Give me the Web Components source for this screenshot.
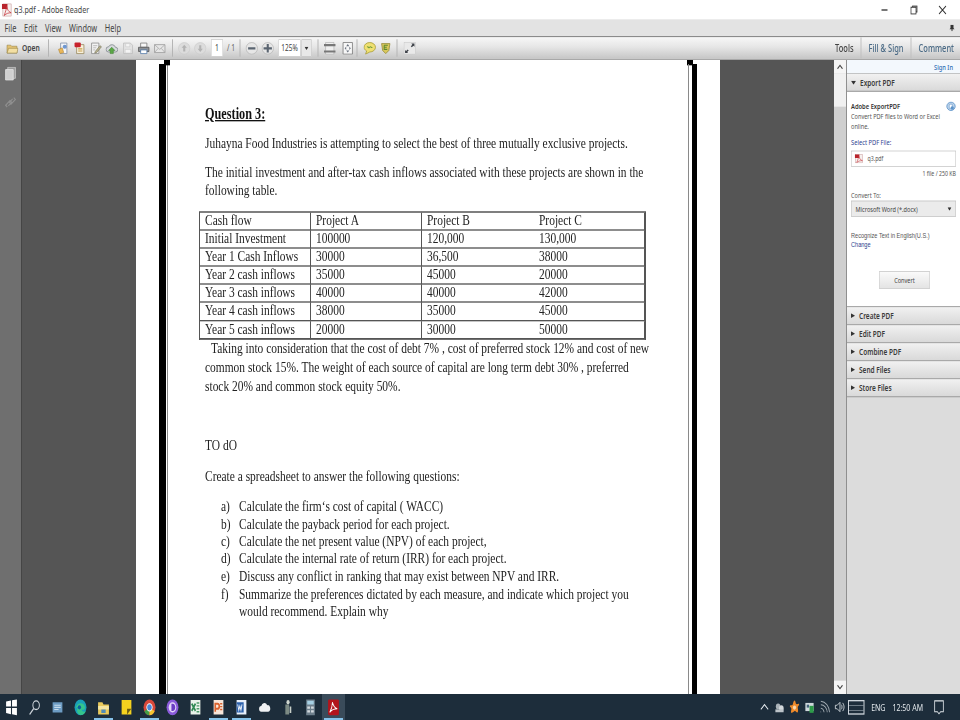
<!DOCTYPE html>
<html lang="en">
<head>
<meta charset="UTF-8">
<title>q3.pdf - Adobe Reader</title>
<style>
  html,body{margin:0;padding:0;overflow:hidden;background:#fff;width:960px;height:720px}
</style>
</head>
<body>
<!-- the capture is a 1920x1080 desktop squeezed to 960x720, so lay out at full size and scale the app -->
<reader-app>
  <title-bar slot="top" name="q3.pdf - Adobe Reader"></title-bar>
  <menu-bar slot="top"></menu-bar>
  <tool-bar slot="top"></tool-bar>
  <nav-rail slot="main"></nav-rail>
  <pdf-view slot="main">
    <pdf-page>
      <h3>Question 3:</h3>
      <p style="margin-top:16.500px">Juhayna Food Industries is attempting to select the best of three mutually exclusive projects.</p>
      <p style="margin-top:17px">The initial investment and after-tax cash inflows associated with these projects are shown in the following table.</p>
      <cash-table></cash-table>
      <p style="text-indent:12px;line-height:28.500px">Taking into consideration that the cost of debt 7% , cost of preferred stock 12% and cost of new common stock 15%. The weight of each source of capital are long term debt 30% , preferred stock 20% and common stock equity 50%.</p>
      <p style="margin-top:60px">TO dO</p>
      <p style="margin-top:19.500px">Create a spreadsheet to answer the following questions:</p>
      <div style="margin-top:19.500px">
        <q-item mark="a)">Calculate the firm‘s cost of capital ( WACC)</q-item>
        <q-item mark="b)">Calculate the payback period for each project.</q-item>
        <q-item mark="c)">Calculate the net present value (NPV) of each project,</q-item>
        <q-item mark="d)">Calculate the internal rate of return (IRR) for each project.</q-item>
        <q-item mark="e)">Discuss any conflict in ranking that may exist between NPV and IRR.</q-item>
        <q-item mark="f)">Summarize the preferences dictated by each measure, and indicate which project you would recommend. Explain why</q-item>
      </div>
    </pdf-page>
  </pdf-view>
  <v-scroll slot="main"></v-scroll>
  <side-panel slot="main"></side-panel>
  <task-bar slot="bottom"></task-bar>
</reader-app>

<script>
  // icons are drawn on a 24x24 grid, the non uniform scale of the app is undone by the svg size
  const ICONS = {
    folder:'<path d="M2 6h7l2 2h10v13H2z" fill="#e3c272" stroke="#8f7a3c"/><path d="M2 21l3-9h18l-2 9z" fill="#f3dfa3" stroke="#8f7a3c"/>',
    create:'<path d="M6 2h12v20H6z" fill="#f4f6fa" stroke="#7d8ca5" stroke-width="1.500"/><path d="M2 14l7-3 3 9-7 2z" fill="#e9b75a" stroke="#a87b2a"/><circle cx="14" cy="9" r="4" fill="#6f97cf"/>',
    pdf:'<path d="M6 5h14v17H6z" fill="#f8f1dc" stroke="#97865a" stroke-width="1.500"/><rect x="2" y="1" width="12" height="9" rx="2" fill="#c8232c"/><path d="M9 13h8M9 17h8" stroke="#c8a04c" stroke-width="2"/>',
    edit:'<path d="M4 2h14v20H4z" fill="#f3f3f3" stroke="#8a8a8a" stroke-width="1.500"/><path d="M7 7h8M7 11h6M7 15h4" stroke="#aaa" stroke-width="1.500"/><path d="M11 18l9-11 3 2-9 11-4 1z" fill="#b5b08c" stroke="#6d6a50"/>',
    cloud:'<path d="M6 19a5 5 0 0 1 0-10 7 7 0 0 1 13 1 4.500 4.500 0 0 1 0 9z" fill="#d6d9dc" stroke="#80868c" stroke-width="1.500"/><path d="M12 10l6 6h-3v6H9v-6H6z" fill="#5aa845" stroke="#3c7d2c"/>',
    save:'<path d="M4 2h13l4 4v16H4z" fill="#e4e4e4" stroke="#bdbdbd" stroke-width="1.500"/><path d="M8 3h8v6H8zM7 14h11v7H7z" fill="#f4f4f4" stroke="#c5c5c5"/>',
    print:'<path d="M6 2h12v8H6z" fill="#f7f7f7" stroke="#777" stroke-width="1.500"/><path d="M2 10h20v8H2z" fill="#8d9196" stroke="#555" stroke-width="1.500"/><path d="M6 15h12v7H6z" fill="#fff" stroke="#4e77a8" stroke-width="1.500"/>',
    mail:'<path d="M2 5h20v15H2z" fill="#e6e6e6" stroke="#9a9a9a" stroke-width="1.500"/><path d="M2 5l10 9 10-9M2 20l7-8M22 20l-7-8" fill="none" stroke="#a8a8a8" stroke-width="1.500"/>',
    up:'<circle cx="12" cy="12" r="11" fill="#dcdcdc" stroke="#c8c8c8"/><path d="M12 5l5 6h-3v7h-4v-7H7z" fill="#b3b3b3"/>',
    down:'<circle cx="12" cy="12" r="11" fill="#dcdcdc" stroke="#c8c8c8"/><path d="M12 19l5-6h-3V6h-4v7H7z" fill="#b3b3b3"/>',
    minus:'<circle cx="12" cy="12" r="11" fill="#e6e6e6" stroke="#a5a5a5"/><path d="M5 10h14v4H5z" fill="#5a6470"/>',
    plus:'<circle cx="12" cy="12" r="11" fill="#e6e6e6" stroke="#a5a5a5"/><path d="M10 4h4v6h6v4h-6v6h-4v-6H4v-4h6z" fill="#5a6470"/>',
    fitw:'<path d="M4 1h16v22H4z" fill="#efefef" stroke="#a0a0a0"/><path d="M1 4h22v4H1zM1 16h22v4H1z" fill="#777"/>',
    fitp:'<path d="M3 1h18v22H3z" fill="#f7f7f7" stroke="#777" stroke-width="1.500"/><path d="M12 4l3 4H9zM12 20l3-4H9zM6 12l3-3v6zM18 12l-3-3v6z" fill="#6c7480"/>',
    note:'<path d="M12 1c6 0 11 4 11 9s-5 9-11 9l-8 4 2-6c-3-2-5-4-5-7 0-5 5-9 11-9z" fill="#efe071" stroke="#a69a3c" stroke-width="1.500"/><path d="M7 10c2-3 3 3 5 0s3 2 5 0" fill="none" stroke="#6f9a3b" stroke-width="2"/>',
    stamp:'<path d="M4 3h16l-2 13-6 6-6-6z" fill="#d9c85c" stroke="#958a38" stroke-width="1.500"/><path d="M9 6h7M9 6v8h6M9 10h5" fill="none" stroke="#5f8a2e" stroke-width="2"/>',
    expand:'<rect x="1" y="1" width="22" height="22" fill="#e9e9e9" stroke="#c5c5c5"/><path d="M15 3h6v6l-2-2-3 3-2-2 3-3zM9 21H3v-6l2 2 3-3 2 2-3 3z" fill="#3d4148"/>',
    pages:'<path d="M7 1h14v19H7z" fill="#9a9a9a" stroke="#c9c9c9" stroke-width="1.500"/><path d="M3 5h14v18H3z" fill="#cfcfcf" stroke="#e2e2e2" stroke-width="1.500"/>',
    clip:'<path d="M6 20l-3-3 8-8 3 3-6 6M18 4l3 3-8 8-3-3 6-6" fill="none" stroke="#8f8f8f" stroke-width="2"/>',
    acro:'<rect x="3" y="1" width="18" height="22" fill="#f6f0ee" stroke="#b98080"/><path d="M1 1h12v9H1z" fill="#b8242c"/><path d="M6 22c3-8 5-12 5-16 2 6 5 9 10 11-6 0-10 1-15 5z" fill="none" stroke="#c8343c" stroke-width="1.500"/>',
    exportp:'<circle cx="12" cy="12" r="10" fill="#bcd4ec" stroke="#5d93c9" stroke-width="2"/><path d="M8 7h7v10H8z" fill="#fff" stroke="#3d7ab8"/><circle cx="15" cy="16" r="4" fill="#5d93c9"/>',
    win:'<path d="M2 4l9-1.500V11H2zM13 2.200L22 1v10h-9zM2 13h9v8.500L2 20zM13 13h9v10l-9-1.300z" fill="#fff"/>',
    search:'<circle cx="15" cy="9" r="6" fill="none" stroke="#cfd6dc" stroke-width="1.800"/><path d="M10.500 13.500L3 22" stroke="#cfd6dc" stroke-width="2"/>',
    tv:'<path d="M3 5h18v14H3z" fill="#6d9cc4"/><path d="M6 9h12M6 12h12M6 15h8" stroke="#c6dcec" stroke-width="1.500"/>',
    edge:'<circle cx="12" cy="12" r="11" fill="#1aa0b8"/><path d="M3 14c2-9 14-10 17-3 1 3-1 5-6 4 1 3 5 4 8 2-3 6-10 7-14 4-3-2-3-7 0-9-3 0-4 1-5 2z" fill="#34c48c"/><circle cx="10" cy="12" r="3" fill="#0d5f9c"/>',
    files:'<path d="M2 5h8l2 3h10v14H2z" fill="#e8c95c"/><path d="M2 10h20v5H2z" fill="#f5e6a2"/><path d="M8 15h8v5H8z" fill="#4f8bb8"/>',
    sticky:'<path d="M3 2h18v20H3z" fill="#f4d21f"/><path d="M13 22l8-8h-8z" fill="#6d5f12"/>',
    chrome:'<circle cx="12" cy="12" r="11" fill="#d8483a"/><path d="M12 12L2.500 17.500A11 11 0 0 0 12 23z" fill="#43a047"/><path d="M12 12l9.500 5.500A11 11 0 0 1 12 23z" fill="#f4c430"/><circle cx="12" cy="12" r="5" fill="#4a88d8" stroke="#fff" stroke-width="1.500"/>',
    disc:'<circle cx="12" cy="12" r="11" fill="#8b5bdc"/><circle cx="12" cy="12" r="7" fill="#e3d8f8"/><path d="M10 7h2a5 5 0 0 1 0 10h-2z" fill="#6a3cc4"/>',
    excel:'<path d="M3 2h18v20H3z" fill="#e9f2ea"/><path d="M14 6h5M14 10h5M14 14h5M14 18h5" stroke="#4e9a6a" stroke-width="2"/><path d="M5 7l7 10M12 7L5 17" stroke="#2f8a53" stroke-width="3"/>',
    ppt:'<path d="M3 2h18v20H3z" fill="#f8e6da"/><path d="M15 7h4M15 11h4M15 15h4" stroke="#d9622f" stroke-width="2"/><path d="M6 18V7h4a3 3 0 0 1 0 7H6" fill="none" stroke="#d9622f" stroke-width="3"/>',
    word:'<path d="M3 2h18v20H3z" fill="#e9f0fa"/><path d="M3 5h13v14H3z" fill="#2d62ad"/><path d="M5 8l2 8 2-6 2 6 2-8" fill="none" stroke="#fff" stroke-width="1.500"/>',
    onedrive:'<path d="M6 18a4 4 0 0 1 0-8 6 6 0 0 1 11-1 4.500 4.500 0 0 1 2 9z" fill="#f0f2f4"/>',
    tools:'<path d="M8 8h7v14H8z" fill="#7c8a84"/><circle cx="13" cy="5" r="3" fill="#cfd6cf"/><path d="M16 11h3v9h-3z" fill="#c8cfc8"/>',
    calc:'<path d="M4 1h16v22H4z" fill="#6e7f8c"/><path d="M6 3h12v5H6z" fill="#a6d0e4"/><path d="M6 11h5v3H6zM13 11h5v3h-5zM6 16h5v3H6zM13 16h5v3h-5z" fill="#d3dade"/>',
    acrobat:'<rect x="2" y="1" width="20" height="22" rx="2" fill="#b3141c"/><path d="M5 19c4-5 5-10 5-14 2 6 4 8 9 9-6 0-10 1-14 5z" fill="none" stroke="#fff" stroke-width="1.500"/>',
    caret:'<path d="M4 16l8-8 8 8" fill="none" stroke="#e7edf2" stroke-width="2"/>',
    people:'<circle cx="9" cy="11" r="5" fill="#aab2b8"/><circle cx="16" cy="14" r="5" fill="#d3d8dc"/><path d="M3 21h18v-5H3z" fill="#bcc3c8"/>',
    avast:'<path d="M13 1c2 3 1 5 3 6s5-2 6 0-3 4-3 6 2 6 0 8-4-2-6-2-6 4-8 3 1-6 0-8-4-2-3-4 5 0 6-2 2-8 5-7z" fill="#ee8a2a"/><circle cx="12" cy="13" r="3.500" fill="#f7d9b0"/>',
    store:'<path d="M3 5h18v14H3z" fill="#cfd8dc"/><path d="M12 10h9v12h-9z" fill="#2e9c4a"/><path d="M6 8h5v5H6z" fill="#43627a"/>',
    wifi:'<path d="M4 21a3 3 0 0 1 0-1M4 14a8 8 0 0 1 7 7M4 8a14 14 0 0 1 14 13M4 2a20 20 0 0 1 19 19" fill="none" stroke="#a4adb4" stroke-width="1.800"/>',
    speaker:'<path d="M3 9h4l6-5v16l-6-5H3z" fill="none" stroke="#e2e7eb" stroke-width="1.500"/><path d="M16 8c2 2 2 6 0 8M19 5c4 4 4 10 0 14" fill="none" stroke="#e2e7eb" stroke-width="1.500"/>',
    notify:'<path d="M4 3h16v15h-5l-3 3-3-3H4z" fill="none" stroke="#e2e7eb" stroke-width="1.500"/>'
  };
  const svg = (name, w = 24, h = 18) =>
    `<svg width="${w}" height="${h}" viewBox="0 0 24 24" preserveAspectRatio="none" style="display:block;flex:none">${ICONS[name]}</svg>`;

  // small helper, every element gets its own open shadow root
  function define(tag, html, render){
    customElements.define(tag, class extends HTMLElement{
      connectedCallback(){
        if(this.shadowRoot) return;
        this.attachShadow({mode:'open'}).innerHTML = render ? html + render(this) : html;
      }
    });
  }

  const UI = `font-family:"Noto Sans","Liberation Sans",sans-serif;`;

  define('reader-app', `
    <style>
      :host{display:block;width:960px;height:720px;overflow:hidden;background:#fff;${UI}}
      .stage{display:flex;flex-direction:column;width:1920px;height:1080px;transform:scale(.5,.66667);transform-origin:0 0;filter:blur(.5px);overflow:hidden}
      .main{display:flex;height:951px;overflow:hidden;flex:none}
    </style>
    <div class="stage">
      <div><slot name="top"></slot></div>
      <div class="main"><slot name="main"></slot></div>
      <slot name="bottom"></slot>
    </div>`);

  define('title-bar', `
    <style>
      :host{display:flex;align-items:center;height:29px;background:#fff;color:#444;font-size:14.300px}
      .ic{margin:0 3px 0 3px}
      .sp{flex:1}
      .b{width:58px;display:flex;justify-content:center}
    </style>`, el => `
    <span class="ic">${svg('acro',22,20)}</span><span>${el.getAttribute('name')}</span><span class="sp"></span>
    <span class="b"><svg width="18" height="12" viewBox="0 0 18 12"><path d="M3 6h12" stroke="#333" stroke-width="2"/></svg></span>
    <span class="b"><svg width="18" height="14" viewBox="0 0 18 14"><path d="M4 3h10v10H4zM7 3V1h9v9h-2" fill="none" stroke="#333" stroke-width="1.500"/></svg></span>
    <span class="b" style="margin-right:6px"><svg width="18" height="14" viewBox="0 0 18 14"><path d="M2 1l14 12M16 1L2 13" stroke="#333" stroke-width="1.500"/></svg></span>`);

  define('menu-bar', `
    <style>
      :host{display:flex;align-items:center;height:27px;background:#e3e3e3;color:#444;font-size:14.800px;border-bottom:2px solid #8b8b8b;box-sizing:border-box;padding-left:9px;gap:15.500px}
      .sp{flex:1}
      svg{margin-right:10px}
    </style>
    <span>File</span><span>Edit</span><span>View</span><span>Window</span><span>Help</span><span class="sp"></span>
    <svg width="12" height="10" viewBox="0 0 12 10"><path d="M3 0h6v5l2 2H1l2-2zM5 7h2v3H5z" fill="#333"/></svg>`);

  define('tool-btn', `
    <style>:host{display:flex;width:32px;height:32px;align-items:center;justify-content:center;flex:none}</style>`,
    el => svg(el.getAttribute('i'), 25, 19));

  define('tool-bar', `
    <style>
      :host{display:flex;align-items:center;height:34px;background:linear-gradient(#f7f7f7,#e6e6e6 45%,#c6c6c6);color:#444;font-size:13.500px;border-bottom:2px solid #a8a8a8;box-sizing:border-box;padding-left:8px;padding-right:12px}
      .open{margin:0 18px 0 4px;font-weight:600;width:34px;white-space:nowrap}
      .sep{width:2px;height:26px;background:#b5b5b5;flex:none}
      .inp{background:#fff;border:1px solid #c2c2c2;box-sizing:border-box;height:26px;display:flex;align-items:center;justify-content:center;flex:none}
      .dd{width:20px;height:26px;margin-left:2px;background:#e8e8e8;border:1px solid #c2c2c2;box-sizing:border-box;display:flex;align-items:center;justify-content:center}
      .sp{flex:1}
      .tab{color:#4a6a85;font-weight:500;font-size:15px;display:flex;height:100%;align-items:center;padding:0 14px;border-left:2px solid #c0c0c0}
      .tab.first{border-left:0;color:#444}
      .tab:last-child{padding-right:0}
    </style>
    <tool-btn i="folder"></tool-btn><span class="open">Open</span><span class="sep" style="margin-right:13px"></span>
    <tool-btn i="create"></tool-btn><tool-btn i="pdf"></tool-btn><tool-btn i="edit"></tool-btn><tool-btn i="cloud"></tool-btn><tool-btn i="save"></tool-btn><tool-btn i="print"></tool-btn><tool-btn i="mail"></tool-btn>
    <span class="sep" style="margin:0 6px 0 9px"></span>
    <tool-btn i="up"></tool-btn><tool-btn i="down"></tool-btn>
    <span class="inp" style="width:24px;margin-left:6px">1</span><span style="margin:0 9px 0 8px;color:#666;white-space:nowrap">/ 1</span><span class="sep" style="margin-right:6px"></span>
    <tool-btn i="minus"></tool-btn><tool-btn i="plus"></tool-btn>
    <span class="inp" style="width:44px;margin-left:6px;font-size:13px">125%</span><span class="dd"><svg width="8" height="5" viewBox="0 0 8 5"><path d="M0 0h8L4 5z" fill="#333"/></svg></span>
    <span class="sep" style="margin:0 6px 0 12px"></span>
    <tool-btn i="fitw"></tool-btn><tool-btn i="fitp" style="margin-left:4px"></tool-btn><span class="sep" style="margin:0 8px 0 2px"></span>
    <tool-btn i="note"></tool-btn><tool-btn i="stamp"></tool-btn><span class="sep" style="margin:0 8px 0 6px"></span>
    <tool-btn i="expand"></tool-btn>
    <span class="sp"></span>
    <span class="tab first">Tools</span><span class="tab">Fill &amp; Sign</span><span class="tab">Comment</span>`);

  define('nav-rail', `
    <style>
      :host{display:flex;flex-direction:column;align-items:center;width:44px;flex:none;background:#6f6f6f;border-right:2px solid #454545;box-sizing:border-box;padding-top:10px;gap:22px}
    </style>` + svg('pages',26,21) + svg('clip',26,21));

  define('pdf-view', `
    <style>
      :host{display:flex;flex:none;width:1624px;background:#555;padding:0 0 0 228px;box-sizing:border-box}
    </style><slot></slot>`);

  define('pdf-page', `
    <style>
      :host{display:block;width:1168px;height:951px;background:#fff;box-sizing:border-box;padding:6px 46px 0 46px;flex:none}
      .frame{height:100%;box-sizing:border-box;position:relative;border-left:14px solid #000;border-right:10px solid #000;padding:60px 0 0 78px}
      .frame::before,.frame::after{content:"";position:absolute;top:0;bottom:0;width:2px;background:#8a8a8a}
      .frame::before{left:2px}
      .frame::after{right:6px}
      .ledge{position:absolute;top:-6px;width:12px;height:8px;background:#000}
      .body{width:894px;font:22.900px/27px "Liberation Serif",serif;color:#222}
      ::slotted(h3){margin:0;font:bold 24.500px/28px "Liberation Serif",serif;text-decoration:underline;color:#111}
      ::slotted(p){margin:0}
    </style>
    <div class="frame">
      <span class="ledge" style="left:-4px"></span><span class="ledge" style="right:-2px"></span>
      <div class="body"><slot></slot></div>
    </div>`);

  define('q-item', `
    <style>
      :host{display:grid;grid-template-columns:36px 1fr;padding-left:32px;line-height:26.200px}
    </style>`, el => `<span>${el.getAttribute('mark')}</span><span><slot></slot></span>`);

  const ROWS = [
    ['Cash flow','Project A','Project B','Project C'],
    ['Initial Investment','100000','120,000','130,000'],
    ['Year 1 Cash Inflows','30000','36,500','38000'],
    ['Year 2 cash inflows','35000','45000','20000'],
    ['Year 3 cash inflows','40000','40000','42000'],
    ['Year 4 cash inflows','38000','35000','45000'],
    ['Year 5 cash inflows','20000','30000','50000']
  ];
  define('cash-table', `
    <style>
      :host{display:grid;grid-template-columns:222px 222px 224px 222px;grid-auto-rows:27.200px;margin:18px 0 -1.500px -12px;width:894px;border:2px solid #555;box-sizing:border-box;border-width:2px 2px 1px 2px;background:#fff;color:#222}
      div{padding-left:10px;border-right:2px solid #555;border-bottom:2px solid #555;box-sizing:border-box;line-height:23.500px;white-space:nowrap;overflow:hidden}
      div:nth-child(4n){border-right:0}
    </style>`, () => ROWS.flat().map(c => `<div>${c}</div>`).join(''));

  define('v-scroll', `
    <style>
      :host{display:flex;flex-direction:column;width:24px;flex:none;background:#cfcfcf}
      .a{height:20px;background:#f5f5f5;display:flex;align-items:center;justify-content:center}
      .t{height:50px;background:#f0f0f0}
      .m{flex:1}
    </style>
    <div class="a"><svg width="14" height="8" viewBox="0 0 14 8"><path d="M2 7l5-5 5 5" fill="none" stroke="#444" stroke-width="2"/></svg></div>
    <div class="t"></div><div class="m"></div>
    <div class="a"><svg width="14" height="8" viewBox="0 0 14 8"><path d="M2 1l5 5 5-5" fill="none" stroke="#444" stroke-width="2"/></svg></div>`);

  define('panel-head', `
    <style>
      :host{display:flex;align-items:center;height:27px;background:linear-gradient(#f1f1f1,#d9d9d9);border-bottom:2px solid #a9a9a9;box-sizing:border-box;font-size:13px;font-weight:600;color:#3b3b3b;padding-left:8px;gap:8px}
      svg{flex:none}
    </style>`, el => (el.hasAttribute('open')
      ? '<svg width="10" height="6" viewBox="0 0 10 6"><path d="M0 0h10L5 6z" fill="#333"/></svg>'
      : '<svg width="8" height="7" viewBox="0 0 8 7"><path d="M0 0l8 3.500L0 7z" fill="#333"/></svg>') + `<span>${el.getAttribute('t')}</span>`);

  define('side-panel', `
    <style>
      :host{display:flex;flex-direction:column;width:228px;flex:none;background:#dcdcdc;border-left:2px solid #8f8f8f;box-sizing:border-box;font-size:11.200px;color:#555}
      .sign{height:21px;background:#f3f8fd;color:#2f6fb5;font-size:11.500px;font-weight:500;text-align:right;padding:0 14px;line-height:21px;border-bottom:1px solid #aaa;box-sizing:border-box}
      .body{background:#fff;height:323px;box-sizing:border-box;padding:3px 8px 0 8px;border-bottom:2px solid #a9a9a9;flex:none}
      .row{display:flex;justify-content:space-between;align-items:center;padding:10px 0 0;height:27px;box-sizing:border-box}
      .h{font-size:11.600px;font-weight:600;color:#333}
      .d{line-height:14px;margin-top:0}
      .lbl{color:#2e3f8f;margin-top:10px;font-size:11.500px;line-height:16px}
      .field{border:1px solid #bdbdbd;height:24px;display:flex;align-items:center;gap:8px;padding:0 6px;margin:4px 0 0 0;box-sizing:border-box;font-size:10.500px}
      .lim{text-align:right;margin:2px 0 0 0;line-height:16px;font-size:10.500px}
      .sel{background:#ebebeb;border:1px solid #bdbdbd;height:24px;display:flex;align-items:center;justify-content:space-between;padding:0 8px;margin:0;box-sizing:border-box;color:#444}
      .btn{width:102px;height:26px;margin:34px auto 0;border:1px solid #bcbcbc;background:linear-gradient(#fafafa,#e4e4e4);display:flex;align-items:center;justify-content:center;box-sizing:border-box;color:#444;transform:translateX(2px)}
      .lib{font:11.200px/13px "Liberation Sans",sans-serif}
    </style>
    <div class="sign">Sign In</div>
    <panel-head t="Export PDF" open></panel-head>
    <div class="body">
      <div class="row"><span class="h">Adobe ExportPDF</span>${svg('exportp',20,15)}</div>
      <div class="d">Convert PDF files to Word or Excel online.</div>
      <div class="lbl">Select PDF File:</div>
      <div class="field">${svg('acro',18,14)}<span>q3.pdf</span></div>
      <div class="lim">1 file / 250 KB</div>
      <div style="margin-top:17px;line-height:16px">Convert To:</div>
      <div class="sel"><span>Microsoft Word (*.docx)</span><svg width="8" height="5" viewBox="0 0 8 5"><path d="M0 0h8L4 5z" fill="#333"/></svg></div>
      <div class="lib" style="margin-top:22px">Recognize Text in English(U.S.)</div>
      <div class="lib" style="color:#2e3f8f">Change</div>
      <div class="btn">Convert</div>
    </div>
    <panel-head t="Create PDF"></panel-head>
    <panel-head t="Edit PDF"></panel-head>
    <panel-head t="Combine PDF"></panel-head>
    <panel-head t="Send Files"></panel-head>
    <panel-head t="Store Files"></panel-head>`);

  const APPS = [['win'],['search'],['tv'],['edge'],['files',1],['sticky'],['chrome',1],['disc'],['excel'],['ppt',1],['word',1],['onedrive'],['tools'],['calc'],['acrobat',2]];
  const TRAY = ['caret','people','avast','store','wifi','speaker'];
  define('task-bar', `
    <style>
      :host{display:flex;align-items:center;height:39px;background:#1d2d3b;color:#e3e8ec;font-size:14px;flex:none}
      .c{width:46px;height:39px;display:flex;align-items:center;justify-content:center;position:relative;flex:none}
      .c.u::after{content:"";position:absolute;left:4px;right:4px;bottom:0;height:3px;background:#87c3ea}
      .c.act{background:#3a4b5a}
      .sp{flex:1}
      .t{width:30px;display:flex;justify-content:center;flex:none}
      .kb{width:33px;height:22px;border:2px solid #cfd6dc;box-sizing:border-box;margin:0 13px 0 2px;background:repeating-linear-gradient(#1d2d3b 0 6px,#6d7a85 6px 7px)}
    </style>`, () =>
    APPS.map(([n, s]) => `<span class="c${s ? ' u' : ''}${s === 2 ? ' act' : ''}">${svg(n,26,26)}</span>`).join('') +
    '<span class="sp"></span>' +
    TRAY.map(n => `<span class="t">${svg(n,22,21)}</span>`).join('') +
    `<span class="kb"></span><span>ENG</span><span style="margin-left:14px;white-space:nowrap">12:50 AM</span><span class="t" style="margin:0 27px 0 17px">${svg('notify',26,26)}</span>`);
</script>
</body>
</html>
